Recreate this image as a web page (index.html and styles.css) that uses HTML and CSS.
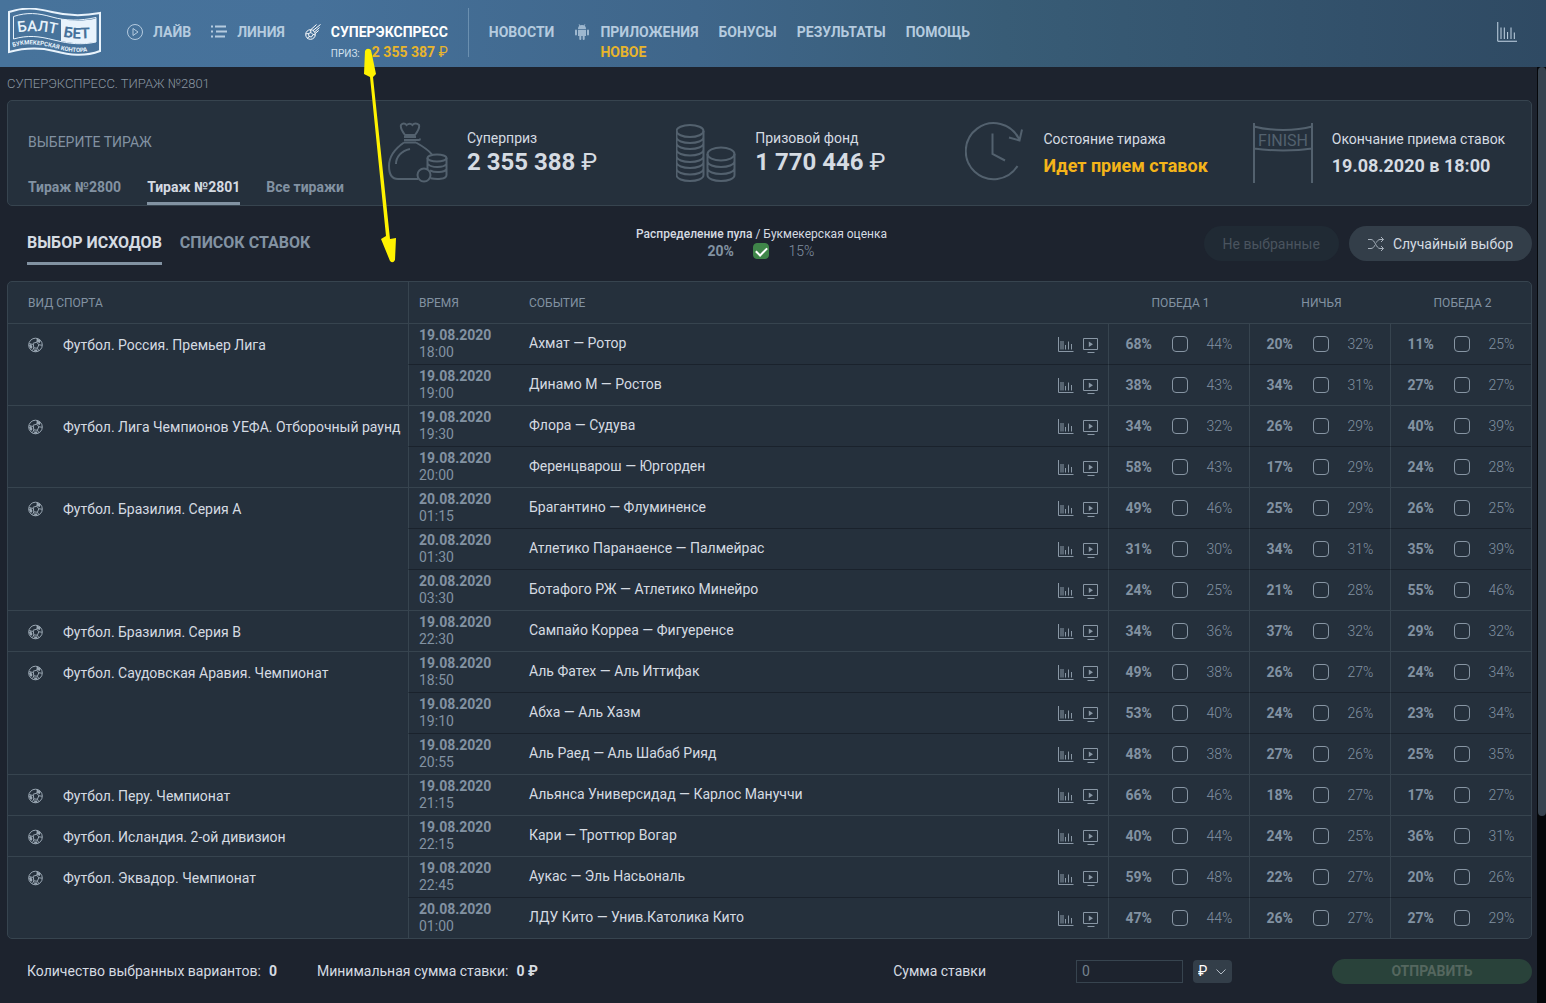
FILE: index.html
```html
<!DOCTYPE html>
<html lang="ru">
<head>
<meta charset="utf-8">
<meta name="viewport" content="width=device-width, initial-scale=1">
<title>Суперэкспресс. Тираж №2801</title>
<link rel="stylesheet" href="styles.css">
</head>
<body>
<svg class="sprite" aria-hidden="true">
  <symbol id="i-chart" viewBox="0 0 20 20"><path d="M.75 0v19.25H20M4 5.500V17M7.300 5.500V17M10.600 10V17M14 5.500V17M17.300 10.500V17"/></symbol>
  <symbol id="i-stat" viewBox="0 0 16 16"><path d="M.5 0v14.500H15.500M3 4V12.500M5 4V12.500M7.500 8V12.500M10.500 4.500V12.500M13.500 7V12.500"/></symbol>
  <symbol id="i-video" viewBox="0 0 16 16"><path d="M.5 1.500h14v11H.5zM4.500 15.500h7"/><path class="solid" d="M5.800 4.500l4.200 2.700-4.200 2.700z"/></symbol>
  <symbol id="i-ball" viewBox="0 0 16 16"><circle cx="7.500" cy="8" r="6.800"/><path d="M5.200 6.200l3.600-1 2 2.600-1.400 3.400-3.600-.3zM8.800 5.200L9.500 2M10.800 7.800l3.200.4M9.400 11.200l1.400 2.500M5.800 10.900L4.500 13.500M4.800 7.500L1.200 6.500"/><path class="solid" d="M8.500 1.500l4 1.500-.6 3-2.700-1zM1 8l2-1 1.500 3-1 1.800-1.500-.8zM6 12.400l3 .2.500 2-3 .2z"/></symbol>
</svg>

<header class="topbar">
  <a class="logo" href="#" aria-label="Балтбет">
    <svg width="94" height="48" viewBox="0 0 94 48">
      <path class="logo-line" d="M1 4C16-1 28 0 44 4S76 8 92 5V43C76 49 62 47 46 43S16 40 1 44Z"/>
      <path class="logo-thin" d="M5.500 8.500C19 4 30 5 44 9S72 13 88 9.500V34C74 37 62 36 46 32S20 27 5.500 31Z"/>
      <path class="logo-fill" d="M53 11C66 13.500 77 13 88 10.500V34C76 36 66 36 53 33Z"/>
      <path id="lg1" class="guide" d="M10 24.500C24 22 36 23 53 27"/>
      <path id="lg2" class="guide" d="M55 28.500C66 31 76 31 90 29.500"/>
      <path id="lg3" class="guide" d="M5 39C20 34 35 37 50 41S76 45 92 41"/>
      <text class="logo-big"><textPath href="#lg1">БАЛТ</textPath></text>
      <text class="logo-big logo-dark"><textPath href="#lg2">БЕТ</textPath></text>
      <text class="logo-small"><textPath href="#lg3">БУКМЕКЕРСКАЯ КОНТОРА</textPath></text>
    </svg>
  </a>
  <nav class="nav nav-main">
    <a class="nav-item" href="#">
      <svg class="nav-icon" width="16" height="16" viewBox="0 0 16 16"><circle cx="8" cy="8" r="7.500"/><path d="M6 4.500L11 8l-5 3.500z"/></svg>
      <span>ЛАЙВ</span>
    </a>
    <a class="nav-item" href="#">
      <svg class="nav-icon lines" width="16" height="16" viewBox="0 0 16 16"><path d="M0 2.500h2M4 2.500h11M0 7.500h2M5 7.500h11M0 12.500h2M4 12.500h10"/></svg>
      <span>ЛИНИЯ</span>
    </a>
    <a class="nav-item active" href="#">
      <svg class="nav-icon" width="16" height="16" viewBox="0 0 16 16"><circle cx="5.500" cy="10.500" r="4.800"/><path d="M3.500 9.500l2.500-1 2 2-1.500 2.500-2.500-.5zM.8 10l2.700-.5M6 8.500l-.5-2.700M8 10.500l2.200.4M4 12.500l-1.500 2M6 5.500L11.500.5M8 6.500l7.500-6M9.500 8l5-4.500M10.200 9.500l3.500-3"/></svg>
      <span class="stack"><span>СУПЕРЭКСПРЕСС</span>
        <span class="prize"><span class="prize-label">ПРИЗ:</span><span class="prize-sum">2 355 387 <span class="rub">₽</span></span></span></span>
    </a>
  </nav>
  <nav class="nav nav-extra">
    <a class="nav-item" href="#"><span>НОВОСТИ</span></a>
    <a class="nav-item" href="#">
      <svg class="nav-icon android" width="16" height="16" viewBox="-1 0 16 16"><path d="M3 5a4 4 0 0 1 8 0zM3 5.700h8v6.300H3zM0 6.500q0-1 1-1t1 1v4q0 1-1 1t-1-1zM12 6.500q0-1 1-1t1 1v4q0 1-1 1t-1-1zM4.300 11.500h2V15q0 1-1 1t-1-1zM7.700 11.500h2V15q0 1-1 1t-1-1zM3.600.4l.6-.3 1 1.600-.6.4zM10.400.4l-.6-.3-1 1.600.6.400z"/></svg>
      <span class="stack"><span>ПРИЛОЖЕНИЯ</span><span class="new">НОВОЕ</span></span>
    </a>
    <a class="nav-item" href="#"><span>БОНУСЫ</span></a>
    <a class="nav-item" href="#"><span>РЕЗУЛЬТАТЫ</span></a>
    <a class="nav-item" href="#"><span>ПОМОЩЬ</span></a>
  </nav>
  <a class="top-stat" href="#" aria-label="Статистика"><svg class="line-icon" width="20" height="20"><use href="#i-chart"/></svg></a>
</header>

<div class="shell">
<main class="page">
  <h1 class="crumb">СУПЕРЭКСПРЕСС. ТИРАЖ №2801</h1>

  <section class="summary">
    <div class="draws">
      <h2 class="draws-title">ВЫБЕРИТЕ ТИРАЖ</h2>
      <div class="draws-tabs">
        <a href="#">Тираж №2800</a>
        <a class="active" href="#">Тираж №2801</a>
        <a href="#">Все тиражи</a>
      </div>
    </div>
    <div class="fact">
      <svg class="fact-icon" width="60" height="62" viewBox="0 0 60 62"><path d="M17 13C14 9 12 6 13 3c1.500-2 4-2 5.500 0 2-1.500 4.500-1.500 6 0C26 1 29 1 31 3c1 3-1 6-4 10zM16 15h12M16 18h15q1 0 1-1.500M16 20.500C8 26 1 33 1 44c0 8 3 13 9 13h20M28 20.500c7 4 13 8 16 12M16 20.500h12M8 42c0-7 5-13 14-15"/><ellipse cx="49" cy="36" rx="9.500" ry="3.500"/><path d="M39.500 36v11M58.500 36v17c0 4.500-10 4.500-16 3.200M40 42c3 4 16 4 18.500 0M42 48.500c5 2.500 14 2 16.500-1"/><circle cx="36" cy="53" r="6.500"/></svg>
      <div><div class="fact-name">Суперприз</div><div class="fact-sum">2 355 388 <span class="rub">₽</span></div></div>
    </div>
    <div class="fact">
      <svg class="fact-icon" width="60" height="62" viewBox="1 1 60 62"><ellipse cx="15" cy="10" rx="13.500" ry="6"/><path d="M1.500 10v44c0 8 27 8 27 0V10M1.500 16c0 8 27 8 27 0M1.500 22c0 8 27 8 27 0M1.500 28.500c0 8 27 8 27 0M1.500 35c0 8 27 8 27 0M1.500 41c0 8 27 8 27 0M1.500 47.500c0 8 27 8 27 0"/><ellipse cx="46" cy="33" rx="13.500" ry="6.500"/><path d="M32.500 33v21c0 8 27 8 27 0V33M32.500 40c0 8 27 8 27 0M32.500 47c0 8 27 8 27 0"/></svg>
      <div><div class="fact-name">Призовой фонд</div><div class="fact-sum">1 770 446 <span class="rub">₽</span></div></div>
    </div>
    <div class="fact">
      <svg class="fact-icon" width="60" height="62" viewBox="0 0 60 62"><path d="M52.500 44A28 28 0 1 1 54 17M44 15.500l10.500 3L57 7.500M27.500 11.500V32L40 38.500"/></svg>
      <div class="fact-wide"><div class="fact-name">Состояние тиража</div><div class="fact-state open">Идет прием ставок</div></div>
    </div>
    <div class="fact">
      <svg class="fact-icon" width="60" height="62" viewBox="0 0 60 62"><path d="M1 1v60M59 1v60M1 4.500c16 4.500 42 4.500 58 0M1 26.500c16 2.500 42 2.500 58 0"/><text x="30" y="24" class="finish">FINISH</text></svg>
      <div class="fact-wide"><div class="fact-name">Окончание приема ставок</div><div class="fact-state">19.08.2020 в 18:00</div></div>
    </div>
  </section>

  <section class="toolbar">
    <div class="views">
      <a class="active" href="#">ВЫБОР ИСХОДОВ</a>
      <a href="#">СПИСОК СТАВОК</a>
    </div>
    <div class="legend">
      <div><b>Распределение пула</b> / Букмекерская оценка</div>
      <label class="pick"><b>20%</b><input type="checkbox" checked><span>15%</span></label>
    </div>
    <div class="actions">
      <button class="btn" type="button" disabled>Не выбранные</button>
      <button class="btn btn-random" type="button">
        <svg class="line-icon" width="16" height="14" viewBox="0 0 16 14"><path d="M0 2.500h3C7 2.500 8 11.500 12 11.500h3.500M0 11.500h3c1.800 0 3-1.500 3.900-3.300M8.300 5.600C9.300 3.900 10.300 2.500 12 2.500h3.500M13 0l2.500 2.500L13 5M13 9l2.500 2.500L13 14"/></svg>
        Случайный выбор</button>
    </div>
  </section>

  <div class="coupon">
    <table>
      <colgroup><col class="c-sport"><col class="c-time"><col><col class="c-links"><col class="c-odds"><col class="c-odds"><col class="c-odds"></colgroup>
      <thead><tr><th class="sport">ВИД СПОРТА</th><th class="time">ВРЕМЯ</th><th class="event" colspan="2">СОБЫТИЕ</th><th class="outcome">ПОБЕДА 1</th><th class="outcome">НИЧЬЯ</th><th class="outcome">ПОБЕДА 2</th></tr></thead>
      <tbody id="events"></tbody>
    </table>
  </div>

  <form class="betbar">
    <div class="totals">
      <span>Количество выбранных вариантов:<b>0</b></span>
      <span>Минимальная сумма ставки:<b>0 ₽</b></span>
    </div>
    <label for="stake">Сумма ставки</label>
    <input id="stake" class="stake" type="text" placeholder="0">
    <span class="currency">
      <select aria-label="Валюта"><option>₽</option></select>
      <svg class="line-icon" width="10" height="6" viewBox="0 0 10 6"><path d="M.5.5L5 5l4.500-4.500"/></svg>
    </span>
    <button class="send" type="button" disabled>ОТПРАВИТЬ</button>
  </form>
</main>
<div class="scrollbar" aria-hidden="true"><div class="thumb"></div></div>
</div>

<svg class="pointer" width="36" height="216" viewBox="0 0 36 216" aria-hidden="true"><path d="M2 3Q4-1 8 2l5 24-3 3 17 162 6-1-1 22q-2 4-5 1l-9-22 5-3L7 29l-6-3z"/></svg>
<script src="events.js"></script>
</body>
</html>
```
FILE: events.js
```js
// Each league: [name, [[date, time, event, then pool and bookmaker shares for 1, X and 2], ...]]
const leagues = [
  ["Футбол. Россия. Премьер Лига", [
    ["19.08.2020", "18:00", "Ахмат — Ротор", 68, 44, 20, 32, 11, 25],
    ["19.08.2020", "19:00", "Динамо М — Ростов", 38, 43, 34, 31, 27, 27]]],
  ["Футбол. Лига Чемпионов УЕФА. Отборочный раунд", [
    ["19.08.2020", "19:30", "Флора — Судува", 34, 32, 26, 29, 40, 39],
    ["19.08.2020", "20:00", "Ференцварош — Юргорден", 58, 43, 17, 29, 24, 28]]],
  ["Футбол. Бразилия. Серия А", [
    ["20.08.2020", "01:15", "Брагантино — Флуминенсе", 49, 46, 25, 29, 26, 25],
    ["20.08.2020", "01:30", "Атлетико Паранаенсе — Палмейрас", 31, 30, 34, 31, 35, 39],
    ["20.08.2020", "03:30", "Ботафого РЖ — Атлетико Минейро", 24, 25, 21, 28, 55, 46]]],
  ["Футбол. Бразилия. Серия В", [
    ["19.08.2020", "22:30", "Сампайо Корреа — Фигуеренсе", 34, 36, 37, 32, 29, 32]]],
  ["Футбол. Саудовская Аравия. Чемпионат", [
    ["19.08.2020", "18:50", "Аль Фатех — Аль Иттифак", 49, 38, 26, 27, 24, 34],
    ["19.08.2020", "19:10", "Абха — Аль Хазм", 53, 40, 24, 26, 23, 34],
    ["19.08.2020", "20:55", "Аль Раед — Аль Шабаб Рияд", 48, 38, 27, 26, 25, 35]]],
  ["Футбол. Перу. Чемпионат", [
    ["19.08.2020", "21:15", "Альянса Универсидад — Карлос Мануччи", 66, 46, 18, 27, 17, 27]]],
  ["Футбол. Исландия. 2-ой дивизион", [
    ["19.08.2020", "22:15", "Кари — Троттюр Вогар", 40, 44, 24, 25, 36, 31]]],
  ["Футбол. Эквадор. Чемпионат", [
    ["19.08.2020", "22:45", "Аукас — Эль Насьональ", 59, 48, 22, 27, 20, 26],
    ["20.08.2020", "01:00", "ЛДУ Кито — Унив.Католика Кито", 47, 44, 26, 27, 27, 29]]]
];

const odds = (pool, book) =>
  `<td class="odds"><label class="pick"><b>${pool}%</b><input type="checkbox"><span>${book}%</span></label></td>`;

document.getElementById("events").innerHTML = leagues.map(([league, games]) =>
  games.map(([date, time, event, p1, b1, px, bx, p2, b2], i) => `
    <tr class="${i ? "" : "first"}">
      ${i ? "" : `<td class="sport" rowspan="${games.length}"><div class="league"><svg class="line-icon" width="16" height="16"><use href="#i-ball"/></svg>${league}</div></td>`}
      <td class="time"><b>${date}</b><br>${time}</td>
      <td class="event">${event}</td>
      <td><div class="links"><a href="#" aria-label="Статистика"><svg class="line-icon" width="16" height="16"><use href="#i-stat"/></svg></a><a href="#" aria-label="Видео"><svg class="line-icon" width="16" height="16"><use href="#i-video"/></svg></a></div></td>
      ${odds(p1, b1)}${odds(px, bx)}${odds(p2, b2)}
    </tr>`).join("")).join("");
```
FILE: styles.css
```css
* { box-sizing: border-box; }

:root {
  --bg: #1d232e;
  --panel: #25303c;
  --line: #37444f;
  --line-dark: #1a222c;
  --text: #d5dbe2;
  --muted: #8292a2;
  --gold: #f4b41a;
}

body {
  margin: 0;
  min-height: 100vh;
  display: flex;
  flex-direction: column;
  position: relative;
  background: var(--bg);
  color: var(--text);
  font: 14px/18px Roboto, "Liberation Sans", sans-serif;
}

a { color: inherit; text-decoration: none; }
h1, h2 { margin: 0; font-weight: 400; }
svg { display: block; flex: none; }
.sprite { position: absolute; width: 0; height: 0; }
.line-icon { fill: none; stroke: currentColor; stroke-width: 1; }
.solid { fill: currentColor; stroke: none; }

/* Top bar */
.topbar {
  display: flex;
  align-items: flex-start;
  height: 67px;
  padding: 8px 29px 0 8px;
  background: linear-gradient(90deg, #47739b 0%, #46719a 20%, #3f668a 45%, #385c76 65%, #32506a 88%, #2f4a63 100%);
  color: #b5cbdf;
  font-weight: 700;
}
.logo-line, .logo-thin { fill: none; stroke: #e8f3fc; stroke-width: 2; }
.logo-thin { stroke-width: 1; }
.logo-fill { fill: #e8f3fc; }
.guide { fill: none; }
.logo-big { font-size: 15px; font-weight: 500; fill: #e8f3fc; }
.logo-big.logo-dark { fill: #46719a; font-weight: 700; }
.logo-small { font-size: 6px; font-weight: 700; fill: #e8f3fc; }

.nav { display: flex; gap: 20px; padding-top: 15px; }
.nav-main { margin-left: 25px; }
.nav-extra {
  height: 49px;
  margin-left: 20px;
  padding-left: 20px;
  border-left: 1px solid #6b90b0;
}
.nav-item { display: flex; align-items: flex-start; gap: 10px; }
.nav-icon { margin-top: 1px; fill: none; stroke: currentColor; stroke-width: 1; }
.nav-icon.lines { stroke-width: 2; }
.nav-icon.android { fill: currentColor; stroke: none; opacity: 0.8; }
.nav-item.active { color: #fff; }
.stack { display: flex; flex-direction: column; gap: 2px; }
.prize { display: flex; justify-content: space-between; align-items: baseline; }
.prize-label { font-size: 10px; font-weight: 400; color: #d3e1ee; }
.prize-sum, .new { color: #e8b52c; }
.top-stat { margin: 14px 0 0 auto; color: #c3d5e5; }

/* Content and scrollbar */
.shell { flex: 1; display: flex; }
.page { flex: 1; min-width: 0; padding: 0 5px 0 7px; }
.scrollbar { width: 9px; background: #05070a; padding-left: 1px; }
.thumb { height: 80%; border-radius: 4px; background: #37434f; }

.crumb { height: 33px; padding-top: 8px; font-size: 13px; color: #8a96a2; font-weight: 300; }

/* Draw summary */
.summary {
  display: grid;
  grid-template-columns: 370px repeat(4, 1fr);
  height: 106px;
  border: 1px solid var(--line);
  border-radius: 5px;
  background: var(--panel);
}
.draws { display: flex; flex-direction: column; padding: 32px 0 0 20px; color: var(--muted); }
.draws-title { font-size: 14px; }
.draws-tabs { display: flex; gap: 26px; margin-top: auto; font-weight: 700; }
.draws-tabs a { padding-bottom: 6px; border-bottom: 3px solid transparent; }
.draws-tabs .active, .views .active { color: var(--text); border-color: var(--muted); }
.fact { display: flex; align-items: center; gap: 19px; padding-left: 10px; white-space: nowrap; }
.fact-icon { width: 60px; fill: none; stroke: #53616e; stroke-width: 2; }
.finish { fill: #53616e; stroke: none; font-size: 16px; text-anchor: middle; }
.fact-sum { font-size: 24px; line-height: 30px; font-weight: 700; }
.rub { font-weight: 400; }
.fact-wide { padding-top: 2px; }
.fact-state { margin-top: 6px; font-size: 18px; line-height: 24px; font-weight: 700; }
.open { color: var(--gold); }

/* View tabs and pick actions */
.toolbar {
  display: grid;
  grid-template-columns: 1fr auto 1fr;
  height: 75px;
  padding-top: 20px;
}
.views { display: flex; align-items: flex-start; gap: 18px; padding-left: 20px; font-size: 16px; font-weight: 700; color: var(--muted); }
.views a { padding: 8px 0 10px; border-bottom: 3px solid transparent; }
.legend { display: flex; flex-direction: column; align-items: center; padding-right: 16px; font-size: 12px; line-height: 17px; }
.legend b { font-weight: 500; }
.actions { display: flex; justify-content: flex-end; align-items: flex-start; gap: 10px; }
.btn {
  display: flex;
  align-items: center;
  gap: 9px;
  height: 35px;
  padding: 0 19px;
  border: 0;
  border-radius: 18px;
  background: #333e49;
  color: var(--text);
  font: inherit;
}
.btn:disabled { background: #202a34; color: #4a545f; }
.btn .line-icon { color: #a7b1bb; }

/* Pool share, tick box, bookmaker share */
.pick {
  display: grid;
  grid-template-columns: 27px 16px 27px;
  gap: 19px;
  justify-content: center;
  align-items: center;
  font-size: 14px;
  line-height: 16px;
  color: var(--muted);
}
.pick b { font-weight: 700; }
.pick span { font-weight: 300; }
.pick input {
  appearance: none;
  display: grid;
  place-items: center;
  width: 16px;
  height: 16px;
  margin: 0;
  border: 1px solid #8795a3;
  border-radius: 4px;
}
.pick input:checked { border-color: #3f8549; background: #3f8549; }
.pick input:checked::after {
  content: "";
  width: 9px;
  height: 5px;
  border: solid #fff;
  border-width: 0 0 2px 2px;
  transform: translateY(-1px) rotate(-45deg);
}

/* Coupon table */
.coupon { border: 1px solid var(--line); border-radius: 5px; background: var(--panel); overflow: hidden; }
table { width: 100%; table-layout: fixed; border-collapse: separate; border-spacing: 0; }
.c-sport { width: 400px; }
.c-time { width: 110px; }
.c-links { width: 61px; }
.c-odds { width: 141px; }
th { height: 41px; padding: 0; font-size: 12px; font-weight: 400; color: var(--muted); }
td { height: 41px; padding: 0; border-top: 1px solid var(--line-dark); }
.first td { border-top-color: var(--line); }
.sport { padding-left: 20px; text-align: left; vertical-align: top; }
th.sport { vertical-align: middle; }
.league { display: flex; align-items: center; gap: 19px; padding-top: 12px; white-space: nowrap; }
.league svg { color: #9aa7b3; }
.time { padding-left: 10px; border-left: 1px solid var(--line); text-align: left; color: var(--muted); }
td.time { line-height: 17px; }
.event { padding-left: 11px; text-align: left; }
td.event { padding-bottom: 2px; }
.outcome { padding-left: 4px; }
.links { display: flex; gap: 9px; padding: 1px 0 0 11px; color: #8997a5; }
.odds { padding-left: 1px; border-left: 1px solid var(--line); }

/* Bet bar */
.betbar { display: flex; align-items: center; height: 64px; padding-left: 20px; }
.totals { display: flex; gap: 40px; flex: 1; }
.totals b { margin-left: 8px; font-weight: 700; }
.stake {
  width: 107px;
  height: 23px;
  margin-left: 90px;
  padding: 0 5px;
  border: 1px solid var(--line);
  background: transparent;
  color: var(--text);
  font: inherit;
}
.stake::placeholder { color: #74818d; }
.currency { position: relative; margin: 0 100px 0 10px; }
.currency select {
  display: block;
  appearance: none;
  width: 39px;
  height: 23px;
  padding: 0 5px;
  border: 0;
  border-radius: 4px;
  background: #333e49;
  color: #fff;
  font: inherit;
}
.currency svg { position: absolute; right: 6px; top: 9px; pointer-events: none; color: #b4bdc6; }
.send {
  width: 200px;
  height: 25px;
  border: 0;
  border-radius: 13px;
  background: #29423a;
  color: #55675f;
  font: inherit;
  font-weight: 700;
}

/* Marker laid over the page, from the prize sum to the event list */
.pointer { position: absolute; left: 363px; top: 48px; fill: #fff200; pointer-events: none; }
```
